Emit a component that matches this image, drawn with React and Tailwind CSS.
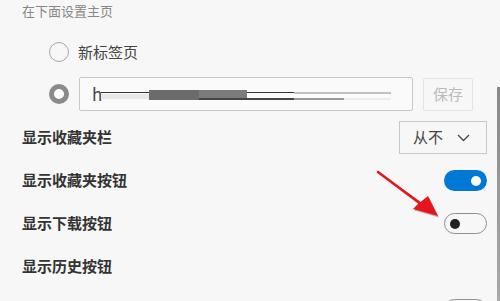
import React from "react";

const font = { fontFamily: '"Noto Sans CJK SC", "Noto Sans", sans-serif' };

const Toggle = ({ on }) =>
  on ? (
    <div className="w-[43px] h-[21px] rounded-full bg-[#0078d4] flex items-center justify-end pr-[6px]">
      <div className="w-[10px] h-[10px] rounded-full bg-white" />
    </div>
  ) : (
    <div className="w-[43px] h-[21px] rounded-full border border-[#8f8f8f] flex items-center pl-[5px]">
      <div className="w-[10px] h-[10px] rounded-full bg-[#222]" />
    </div>
  );

const Row = ({ label, children }) => (
  <div className="h-[43px] flex items-center justify-between">
    <span className="text-[15px] font-bold text-[#333]">{label}</span>
    {children}
  </div>
);

const App = () => {
  return (
    <div
      className="relative w-[500px] h-[301px] overflow-hidden bg-[#f7f7f7] pt-[1px] pl-[22px] pr-[13px]"
      style={font}
    >
      <div className="h-[20px] leading-[20px] text-[13px] text-[#888]">在下面设置主页</div>

      {/* radio: new tab */}
      <div className="mt-[20px] h-[22px] flex items-center ml-[27px] gap-[9px]">
        <div className="w-[20px] h-[20px] rounded-full border border-[#a8a8a8]" />
        <span className="text-[15px] text-[#444]">新标签页</span>
      </div>

      {/* radio: url */}
      <div className="mt-[14px] h-[34px] flex items-center ml-[27px]">
        <div className="w-[20px] h-[20px] rounded-full border-[5px] border-[#8a8a8a] bg-white" />
        <div className="ml-[10px] w-[334px] h-[34px] border border-[#c8c8c8] bg-[#fafafa] rounded-[2px] flex items-center pl-[12px]">
          <span className="text-[17px] text-[#444] leading-none -mt-[2px]">h</span>
          <svg width="290" height="32" viewBox="0 0 290 32" className="-ml-[1px]">
            <rect x="0" y="16" width="48" height="5" fill="#e8e8e8" />
            <line x1="0" y1="14.5" x2="193" y2="14.5" stroke="#333" strokeWidth="1" />
            <rect x="48" y="12" width="50" height="10" fill="#6b6b6b" />
            <rect x="98" y="12" width="48" height="10" fill="#7b7b7b" />
            <line x1="98" y1="21" x2="193" y2="21" stroke="#444" strokeWidth="2" />
            <line x1="193" y1="15" x2="290" y2="15" stroke="#888" strokeWidth="1" />
            <line x1="193" y1="21" x2="243" y2="21" stroke="#999" strokeWidth="2" />
            <line x1="243" y1="21" x2="290" y2="21" stroke="#ececec" strokeWidth="2" />
          </svg>
        </div>
        <div className="ml-[10px] w-[50px] h-[33px] border border-[#e3e3e3] rounded-[2px] flex items-center justify-center text-[15px] text-[#bbb]">
          保存
        </div>
      </div>

      <div className="mt-[5px]">
        <Row label="显示收藏夹栏">
          <div className="w-[88px] h-[33px] border border-[#c8c8c8] flex items-center justify-between pl-[13px] pr-[16px] text-[15px] text-[#444]">
            <span>从不</span>
            <svg width="13" height="8" viewBox="0 0 13 8">
              <polyline points="1,1 6.5,6.5 12,1" fill="none" stroke="#444" strokeWidth="1.3" />
            </svg>
          </div>
        </Row>
        <Row label="显示收藏夹按钮">
          <Toggle on />
        </Row>
        <Row label="显示下载按钮">
          <Toggle />
        </Row>
        <Row label="显示历史按钮" />
        <Row label="">
          <Toggle />
        </Row>
      </div>

      {/* red annotation arrow */}
      <svg className="absolute left-0 top-0 pointer-events-none" width="500" height="301">
        <g transform="translate(1,1.5)" opacity="0.25">
          <polygon points="377,171.5 379,173.5 422,206 420,203" fill="#000" />
          <polygon points="438,216 413,209 418,204 428,196" fill="#000" />
        </g>
        <polygon points="377,171 379.5,173.5 422,206 420.5,202" fill="#e8141b" />
        <line x1="378" y1="172" x2="421" y2="204" stroke="#e8141b" strokeWidth="2.5" strokeLinecap="round" />
        <polygon points="438,216 413,209 418,204 428,196" fill="#e8141b" />
      </svg>

      {/* scrollbar thumb */}
      <div className="absolute right-0 top-[87px] w-[3px] h-[214px] bg-gradient-to-b from-[#888] to-[#aaa]" />
    </div>
  );
};

export default App;
